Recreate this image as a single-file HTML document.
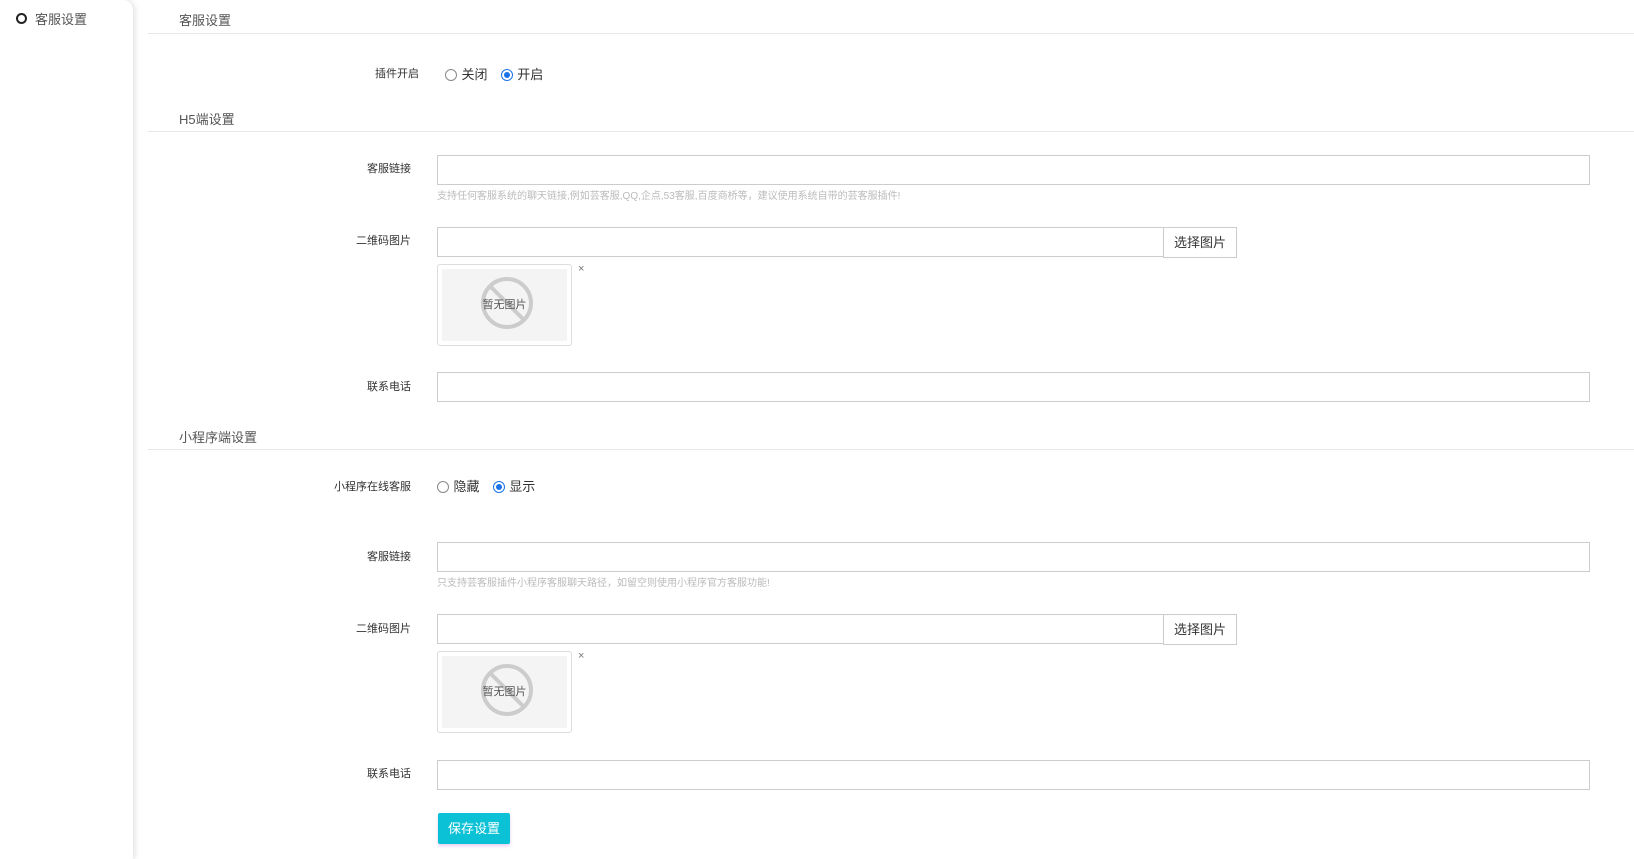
<!DOCTYPE html>
<html><head><meta charset="utf-8"><style>
*{box-sizing:border-box;margin:0;padding:0}
body{width:1634px;height:859px;background:#fff;font-family:"Liberation Sans","Noto Sans CJK SC",sans-serif;position:relative;overflow:hidden;color:#333}
.side{position:absolute;left:0;top:0;width:133px;height:859px;background:#fff;border-radius:0 10px 0 0;box-shadow:2px 0 6px rgba(0,0,0,.12)}
.side .dot{position:absolute;left:16px;top:13px;width:11px;height:11px;border:2px solid #222;border-radius:50%}
.side span{position:absolute;left:35px;top:9px;font-size:13px;color:#555}
.a{position:absolute}
.title{font-size:13px;color:#555;left:179px}
.line{left:148px;right:0;height:1px;background:#e8e8e8}
.lab{font-size:11px;color:#333;text-align:right;width:200px}
.inp{border:1px solid #ccc;background:#fff}
.help{font-size:10px;color:#bbb;left:437px}
.btn{border:1px solid #ccc;font-size:13px;text-align:center;line-height:29px;background:#fff;width:74px;height:31px}
.img{width:135px;height:82px;border:1px solid #ddd;border-radius:3px;padding:4px}
.img div{width:100%;height:100%;background:#f4f4f4;position:relative}
.img svg{position:absolute;left:38px;top:7px}
.img em{position:absolute;left:0;right:0;top:27px;text-align:center;font-style:normal;font-size:11px;color:#555}
.x{font-size:11px;color:#777}
.r{display:inline-block;width:12px;height:12px;border:1px solid #888;border-radius:50%;vertical-align:middle;position:relative;background:#fff}
.r.on{border-color:#1a73e8}
.r.on:after{content:"";position:absolute;left:2px;top:2px;width:6px;height:6px;border-radius:50%;background:#1a73e8}
.rt{font-size:13px;color:#333}
.save{left:438px;top:813px;width:72px;height:31px;background:#0bc1d6;color:#fff;font-size:13px;text-align:center;line-height:31px;border-radius:2px;box-shadow:0 2px 3px rgba(180,120,220,.35)}
</style></head><body>
<div class="side"><div class="dot"></div><span>客服设置</span></div>

<div class="a title" style="top:10px">客服设置</div>
<div class="a line" style="top:33px"></div>
<div class="a lab" style="left:219px;top:65px">插件开启</div>
<div class="a" style="left:445px;top:64px"><span class="r"></span> <span class="rt">关闭</span>&nbsp;&nbsp; <span class="r on"></span> <span class="rt">开启</span></div>

<div class="a title" style="top:109px">H5端设置</div>
<div class="a line" style="top:131px"></div>
<div class="a lab" style="left:211px;top:160px">客服链接</div>
<div class="a inp" style="left:437px;top:155px;width:1153px;height:30px"></div>
<div class="a help" style="top:187px">支持任何客服系统的聊天链接,例如芸客服,QQ,企点,53客服,百度商桥等，建议使用系统自带的芸客服插件!</div>
<div class="a lab" style="left:211px;top:232px">二维码图片</div>
<div class="a inp" style="left:437px;top:227px;width:727px;height:30px"></div>
<div class="a btn" style="left:1163px;top:227px">选择图片</div>
<div class="a img" style="left:437px;top:264px"><div><svg width="54" height="54" viewBox="0 0 54 54"><circle cx="27" cy="27" r="24" fill="none" stroke="#ccc" stroke-width="4"/><line x1="10" y1="10" x2="44" y2="44" stroke="#ccc" stroke-width="4"/></svg><em>暂无图片</em></div></div>
<div class="a x" style="left:578px;top:263px">×</div>
<div class="a lab" style="left:211px;top:378px">联系电话</div>
<div class="a inp" style="left:437px;top:372px;width:1153px;height:30px"></div>

<div class="a title" style="top:427px">小程序端设置</div>
<div class="a line" style="top:449px"></div>
<div class="a lab" style="left:211px;top:478px">小程序在线客服</div>
<div class="a" style="left:437px;top:476px"><span class="r"></span> <span class="rt">隐藏</span>&nbsp;&nbsp; <span class="r on"></span> <span class="rt">显示</span></div>
<div class="a lab" style="left:211px;top:548px">客服链接</div>
<div class="a inp" style="left:437px;top:542px;width:1153px;height:30px"></div>
<div class="a help" style="top:574px">只支持芸客服插件小程序客服聊天路径，如留空则使用小程序官方客服功能!</div>
<div class="a lab" style="left:211px;top:620px">二维码图片</div>
<div class="a inp" style="left:437px;top:614px;width:727px;height:30px"></div>
<div class="a btn" style="left:1163px;top:614px">选择图片</div>
<div class="a img" style="left:437px;top:651px"><div><svg width="54" height="54" viewBox="0 0 54 54"><circle cx="27" cy="27" r="24" fill="none" stroke="#ccc" stroke-width="4"/><line x1="10" y1="10" x2="44" y2="44" stroke="#ccc" stroke-width="4"/></svg><em>暂无图片</em></div></div>
<div class="a x" style="left:578px;top:650px">×</div>
<div class="a lab" style="left:211px;top:765px">联系电话</div>
<div class="a inp" style="left:437px;top:760px;width:1153px;height:30px"></div>
<div class="a save">保存设置</div>
</body></html>
